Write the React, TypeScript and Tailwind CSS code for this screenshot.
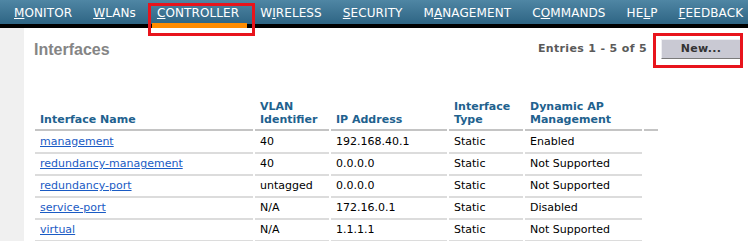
import React from "react";

const navItems = [
  { label: "MONITOR", key: 0 },
  { label: "WLANs", key: 0 },
  { label: "CONTROLLER", key: 0 },
  { label: "WIRELESS", key: 1 },
  { label: "SECURITY", key: 0 },
  { label: "MANAGEMENT", key: 1 },
  { label: "COMMANDS", key: 1 },
  { label: "HELP", key: 2 },
  { label: "FEEDBACK", key: 0 },
];

const rows = [
  ["management", "40", "192.168.40.1", "Static", "Enabled"],
  ["redundancy-management", "40", "0.0.0.0", "Static", "Not Supported"],
  ["redundancy-port", "untagged", "0.0.0.0", "Static", "Not Supported"],
  ["service-port", "N/A", "172.16.0.1", "Static", "Disabled"],
  ["virtual", "N/A", "1.1.1.1", "Static", "Not Supported"],
];

function NavLabel({ label, k }: { label: string; k: number }) {
  return (
    <span>
      {label.slice(0, k)}
      <u>{label[k]}</u>
      {label.slice(k + 1)}
    </span>
  );
}

export default function App() {
  return (
    <div className="relative w-[748px] h-[241px] overflow-hidden bg-white font-['DejaVu_Sans','Verdana',sans-serif]">
      {/* top menu */}
      <div className="h-6 flex pl-[14px] gap-[21px] tracking-[0.1px] text-white text-[12px] bg-gradient-to-b from-[#4f86a4] to-[#2e6584]">
        {navItems.map((n) => (
          <div key={n.label} className="relative h-full flex items-center pt-[1px]">
            <NavLabel label={n.label} k={n.key} />
            {n.label === "CONTROLLER" && (
              <div className="absolute z-10 left-[-5px] right-[-8px] bottom-[-4px] h-[5px] bg-[#ff8c00]" />
            )}
          </div>
        ))}
      </div>
      <div className="h-1 bg-black" />

      <div className="flex h-[213px]">
        <div className="w-6 shrink-0 bg-[#f0f0f0]" />
        <div className="flex-1 pl-[10px] pr-[7px]">
          <div className="flex items-center justify-between h-[42px]">
            <h1 className="font-['Liberation_Sans',Arial,sans-serif] font-bold text-[16px] text-[#858585] mt-[2px]">
              Interfaces
            </h1>
            <div className="flex items-center gap-[14px]">
              <span className="font-bold text-[11px] tracking-[0.35px] text-[#5a5a5a]">Entries 1 - 5 of 5</span>
              <button className="w-[80px] h-[20px] bg-[#c9c9d3] border border-t-[#eeeef2] border-l-[#eeeef2] border-b-[#7a7a7a] border-r-[#7a7a7a] font-bold text-[11px] tracking-[0.3px] text-[#333]">
                New...
              </button>
            </div>
          </div>

          <table className="mt-[30px] border-separate border-spacing-x-[2px] border-spacing-y-0 -ml-[1px] text-[11px]">
            <thead>
              <tr className="text-[#21618e] font-bold text-left align-bottom leading-[13px]">
                <th className="w-[218px] pl-[5px] pb-[3px] border-b-2 border-[#c4c4c4]">Interface Name</th>
                <th className="w-[74px] pl-[5px] pb-[3px] border-b-2 border-[#c4c4c4]">VLAN<br />Identifier</th>
                <th className="w-[116px] pl-[5px] pb-[3px] border-b-2 border-[#c4c4c4]">IP Address</th>
                <th className="w-[74px] pl-[5px] pb-[3px] border-b-2 border-[#c4c4c4]">Interface<br />Type</th>
                <th className="w-[117px] pl-[5px] pb-[3px] border-b-2 border-[#c4c4c4]">Dynamic AP<br />Management</th>
                <th className="w-[14px] border-b-2 border-[#c4c4c4]"></th>
              </tr>
            </thead>
            <tbody>
              {rows.map((r, idx) => (
                <tr key={r[0]} className={idx === 0 ? "h-[23px]" : "h-[22px]"}>
                  <td className="pl-[5px] pt-[1px] border-b-2 border-[#dcdcdc]">
                    <a href="#" className="text-[#1a5bc4] underline">{r[0]}</a>
                  </td>
                  {r.slice(1).map((c, i) => (
                    <td key={i} className="pl-[5px] pt-[1px] border-b-2 border-[#dcdcdc] text-black">{c}</td>
                  ))}
                </tr>
              ))}
            </tbody>
          </table>
        </div>
      </div>

      {/* highlight boxes */}
      <div className="absolute left-[148px] top-[3px] w-[107px] h-[33px] border-[3px] border-[#e8141c]" />
      <div className="absolute left-[653px] top-[33px] w-[90px] h-[35px] border-[3px] border-[#e8141c]" />
    </div>
  );
}
